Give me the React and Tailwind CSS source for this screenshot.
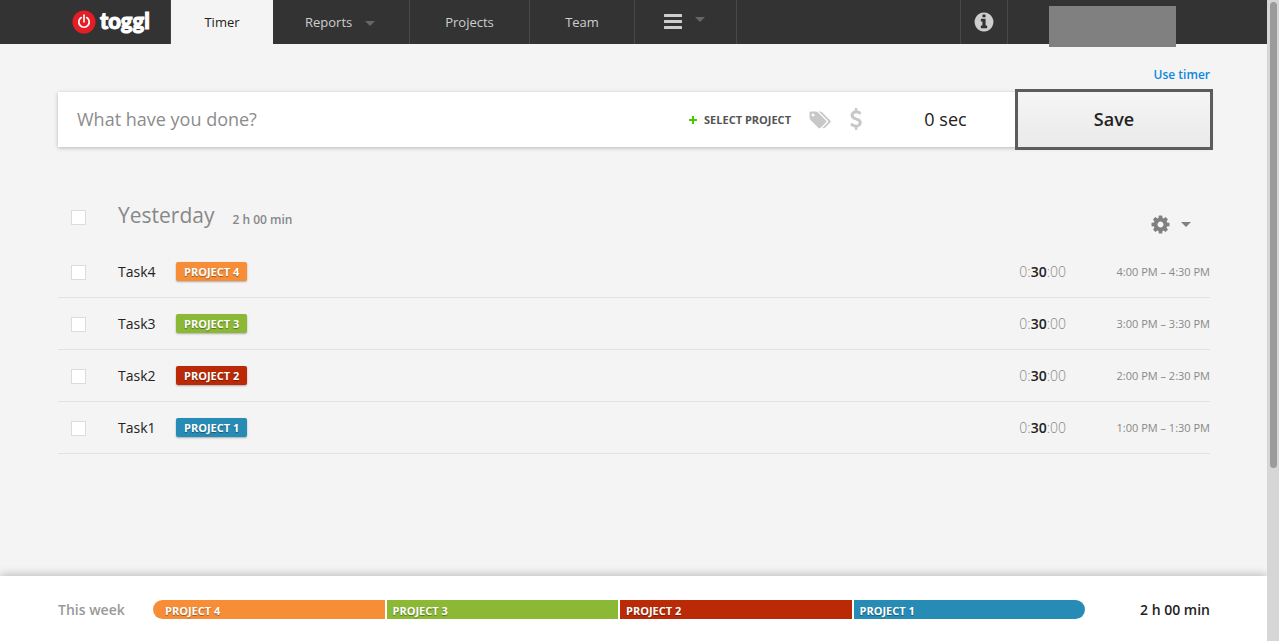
import React from "react";

const entries = [
  { task: "Task4", project: "PROJECT 4", color: "bg-[#f78e37]", range: "4:00 PM – 4:30 PM" },
  { task: "Task3", project: "PROJECT 3", color: "bg-[#8bb835]", range: "3:00 PM – 3:30 PM" },
  { task: "Task2", project: "PROJECT 2", color: "bg-[#bb2a07]", range: "2:00 PM – 2:30 PM" },
  { task: "Task1", project: "PROJECT 1", color: "bg-[#268bb5]", range: "1:00 PM – 1:30 PM" },
];

const TAGS =
  "M576 448q0-53-37.5-90.5t-90.5-37.5-90.5 37.5-37.5 90.5 37.5 90.5 90.5 37.5 90.5-37.5 37.5-90.5zm1067 576q0 53-37 90l-491 492q-39 37-91 37-53 0-90-37l-715-716q-38-37-64.5-101t-26.5-117v-416q0-52 38-90t90-38h416q53 0 117 26.5t102 64.5l715 714q37 39 37 91zm384 0q0 53-37 90l-491 492q-39 37-91 37-36 0-59-14t-53-45l470-470q37-37 37-90 0-52-37-91l-715-714q-38-38-102-64.5t-117-26.5h224q53 0 117 26.5t102 64.5l715 714q37 39 37 91z";
const DOLLAR =
  "M1362 1185q0 153-99.5 263.5t-258.5 136.5v175q0 14-9 23t-23 9h-135q-13 0-22.5-9.5t-9.5-22.5v-175q-66-9-127.5-31t-101.5-44.5-74-48-46.5-37.5-17.5-18q-17-21-2-41l103-135q7-10 23-12 15-2 24 9l2 2q113 99 243 125 37 8 74 8 81 0 142.5-43t61.5-122q0-28-15-53t-33.5-42-58.5-37.5-66-32-80-32.5q-39-16-61.5-25t-61.5-26.5-62.5-31-56.5-35.5-53.5-42.5-43.5-49-35.5-58-21-66.5-8.5-78q0-138 98-242t255-134v-180q0-13 9.5-22.5t22.5-9.5h135q14 0 23 9t9 23v176q57 6 110.5 23t87 33.5 63.5 37.5 39 29 15 14q17 18 5 38l-81 146q-8 15-23 16-14 3-27-7-3-3-14.5-12t-39-26.5-58.5-32-74.5-26-85.5-11.5q-95 0-155 43t-60 111q0 26 8.5 48t29.5 41.5 39.5 33 56 31 60.5 27 70 27.5q53 20 81 31.5t76 35 75.5 42.5 62 50 53 63.5 31.5 76.5 13 94z";
const INFO =
  "M1152 1376v-160q0-14-9-23t-23-9h-96v-512q0-14-9-23t-23-9h-320q-14 0-23 9t-9 23v160q0 14 9 23t23 9h96v320h-96q-14 0-23 9t-9 23v160q0 14 9 23t23 9h448q14 0 23-9t9-23zm-128-896v-160q0-14-9-23t-23-9h-192q-14 0-23 9t-9 23v160q0 14 9 23t23 9h192q14 0 23-9t9-23zm640 416q0 209-103 385.5t-279.5 279.5-385.5 103-385.5-103-279.5-279.5-103-385.5 103-385.5 279.5-279.5 385.5-103 385.5 103 279.5 279.5 103 385.5z";
const COG =
  "M1152 896q0-106-75-181t-181-75-181 75-75 181 75 181 181 75 181-75 75-181zm512-109v222q0 12-8 23t-20 13l-185 28q-19 54-39 91 35 50 107 138 10 12 10 25t-9 23q-27 37-99 108t-94 71q-12 0-26-9l-138-108q-44 23-91 38-16 136-29 186-7 28-36 28h-222q-14 0-24.5-8.5t-11.5-21.5l-28-184q-49-16-90-37l-141 107q-10 9-25 9-14 0-25-11-126-114-165-168-7-10-7-23 0-12 8-23 15-21 51-66.5t54-70.5q-27-50-41-99l-183-27q-13-2-21-12.5t-8-23.5v-222q0-12 8-23t19-13l186-28q14-46 39-92-40-57-107-138-10-12-10-24 0-10 9-23 26-36 98.5-107.5t94.5-71.5q13 0 26 10l138 107q44-23 91-38 16-136 29-186 7-28 36-28h222q14 0 24.5 8.5t11.5 21.5l28 184q49 16 90 37l142-107q9-9 24-9 13 0 25 10 129 119 165 170 7 8 7 22 0 12-8 23-15 21-51 66.5t-54 70.5q26 50 41 98l183 28q13 2 21 12.5t8 23.5z";

function Glyph({ d, viewBox = "0 0 1792 1792", className }) {
  return (
    <svg viewBox={viewBox} fill="currentColor" aria-hidden="true" className={className}>
      <path d={d} />
    </svg>
  );
}

function Caret({ className }) {
  return (
    <svg viewBox="0 0 10 5" fill="currentColor" aria-hidden="true" className={className}>
      <path d="M0 0h10L5 5z" />
    </svg>
  );
}

function Checkbox({ label }) {
  return (
    <input
      type="checkbox"
      aria-label={label}
      className="mt-[2px] mr-8 ml-[13px] size-[15px] shrink-0 appearance-none border border-[#dcdcdc] bg-white checked:bg-[#268bb5]"
    />
  );
}

function Header() {
  return (
    <header className="flex h-11 shrink-0 bg-[#333] text-[13px] text-[#cecece]">
      <a href="#home" aria-label="toggl" className="flex w-[171px] shrink-0 items-center gap-1 border-r border-[#444] pl-[72px]">
        <svg viewBox="0 0 24 24" className="size-6 shrink-0" aria-hidden="true">
          <circle cx="12" cy="12" r="11.5" fill="#e31e26" />
          <path d="M9.3 7.6a5.200 5.200 0 1 0 5.400 0" fill="none" stroke="#fff" strokeWidth="1.7" strokeLinecap="round" />
          <path d="M12 5.200v6.600" fill="none" stroke="#fff" strokeWidth="1.7" strokeLinecap="round" />
        </svg>
        <span className="pb-[2px] font-['Lato',sans-serif] text-[22px] leading-6 font-black text-white [-webkit-text-stroke:1px_white]">toggl</span>
      </a>
      <nav className="flex">
        <a href="#timer" className="flex w-[102px] items-center justify-center bg-[#f4f4f4] pt-[2px] text-[#222]">Timer</a>
        <a href="#reports" className="flex w-[137px] items-center gap-[13px] border-r border-[#484848] pt-[2px] pl-8">
          Reports
          <Caret className="h-[5px] w-[10px] text-[#666]" />
        </a>
        <a href="#projects" className="flex w-[120px] items-center justify-center border-r border-[#484848] pt-[2px]">Projects</a>
        <a href="#team" className="flex w-[105px] items-center justify-center border-r border-[#484848] pt-[2px]">Team</a>
        <button type="button" aria-label="More" className="flex w-[102px] items-center gap-[13px] border-r border-[#484848] pb-px pl-[29px]">
          <svg viewBox="0 0 18 15" fill="currentColor" aria-hidden="true" className="h-[15px] w-[18px]">
            <rect width="18" height="3" rx="0.5" />
            <rect y="6" width="18" height="3" rx="0.5" />
            <rect y="12" width="18" height="3" rx="0.5" />
          </svg>
          <Caret className="mb-1 h-[5px] w-[10px] text-[#666]" />
        </button>
      </nav>
      <div className="ml-auto flex">
        <button type="button" aria-label="Help" className="flex w-12 items-center justify-center border-x border-[#484848] pb-px">
          <Glyph d={INFO} className="size-[22px]" />
        </button>
        <div className="mt-[6px] mr-[91px] ml-[41px] h-[41px] w-[127px] bg-[#808080]" />
      </div>
    </header>
  );
}

function EntryForm() {
  return (
    <form className="flex h-[55px] bg-white text-lg shadow-[0_1px_4px_rgba(0,0,0,0.25)]" onSubmit={(e) => e.preventDefault()}>
      <input
        type="text"
        aria-label="What have you done?"
        placeholder="What have you done?"
        className="min-w-0 flex-1 bg-transparent pb-[2px] pl-[19px] text-[#222] outline-none placeholder:text-[#8c8c8c]"
      />
      <button type="button" className="flex items-center gap-[7px] text-[11px] font-bold text-[#555]">
        <svg viewBox="0 0 8 8" className="size-2" aria-hidden="true">
          <path d="M4 0v8M0 4h8" stroke="#4bc800" strokeWidth="2" />
        </svg>
        SELECT PROJECT
      </button>
      <button type="button" aria-label="Tags" className="ml-[17px] flex items-center text-[#c8c8c8]">
        <Glyph d={TAGS} viewBox="0 0 2048 1792" className="h-5 w-[23px]" />
      </button>
      <button type="button" aria-label="Billable" className="ml-[14px] flex items-center pb-[2px] text-[#c8c8c8]">
        <Glyph d={DOLLAR} className="size-[22px]" />
      </button>
      <button type="button" className="ml-[6px] w-[145px] pb-[2px] text-[#222]">0 sec</button>
      <button
        type="submit"
        className="w-48 bg-linear-to-b from-[#f5f5f5] to-[#eaeaea] pb-[2px] font-semibold text-[#222] outline-3 outline-[#5c5c5c]"
      >
        Save
      </button>
    </form>
  );
}

export default function App() {
  return (
    <div className="flex h-screen bg-[#f4f4f4] font-['Open_Sans',sans-serif] text-[#222]">
      <div className="flex min-w-0 flex-1 flex-col">
        <Header />
        <main className="flex-1 overflow-hidden pr-[57px] pl-[58px]">
          <div className="flex h-12 items-center justify-end pt-[14px] text-xs font-semibold text-[#0c87dd]">
            <a href="#use-timer">Use timer</a>
          </div>
          <EntryForm />
          <section className="mt-12">
            <div className="flex h-[51px] items-center pb-2">
              <Checkbox label="Select all of Yesterday" />
              <h2 className="pb-[2px] text-[21px] text-[#888]">Yesterday</h2>
              <span className="ml-[18px] pt-[6px] text-xs font-semibold text-[#888]">2 h 00 min</span>
              <button type="button" aria-label="Day options" className="mt-4 mr-[19px] ml-auto flex items-center gap-[10px] text-[#808080]">
                <Glyph d={COG} className="size-[21px]" />
                <Caret className="h-[5px] w-[10px]" />
              </button>
            </div>
            <ul>
              {entries.map((e) => (
                <li key={e.task} className="flex h-[52px] items-center border-b border-[#e2e2e2]">
                  <Checkbox label={e.task} />
                  <span className="w-[58px] text-sm">{e.task}</span>
                  <span className={`${e.color} rounded-xs px-2 text-[11px] leading-[19px] font-bold text-white shadow-[0_1px_2px_rgba(0,0,0,0.3)] text-shadow-[0_1px_1px_rgba(0,0,0,0.4)]`}>
                    {e.project}
                  </span>
                  <span className="ml-auto text-sm font-light text-[#888]">
                    0:<b className="font-semibold text-[#222]">30</b>:00
                  </span>
                  <span className="w-36 pt-[2px] text-right text-[11px] text-[#888]">{e.range}</span>
                </li>
              ))}
            </ul>
          </section>
        </main>
        <footer className="z-10 flex h-[65px] shrink-0 items-center bg-white pt-[3px] pr-[57px] pl-[58px] text-sm font-semibold shadow-[0_0_10px_rgba(0,0,0,0.3)]">
          <span className="w-[95px] text-[#999]">This week</span>
          <div className="mb-[2px] grid flex-1 grid-cols-4 gap-[2px] overflow-hidden rounded-full text-[11px] leading-[19px] font-bold text-white">
            {entries.map((e) => (
              <div key={e.project} className={`${e.color} h-[19px] pt-px pl-[6px] first:pl-3 text-shadow-[0_1px_1px_rgba(0,0,0,0.4)]`}>
                {e.project}
              </div>
            ))}
          </div>
          <span className="w-[125px] text-right">2 h 00 min</span>
        </footer>
      </div>
      <div className="z-20 w-3 shrink-0 bg-[#d6d6d6] pt-[2px] pr-[2px] pl-[3px]">
        <div className="h-[73%] rounded-full bg-[#9b9b9d]" />
      </div>
    </div>
  );
}
